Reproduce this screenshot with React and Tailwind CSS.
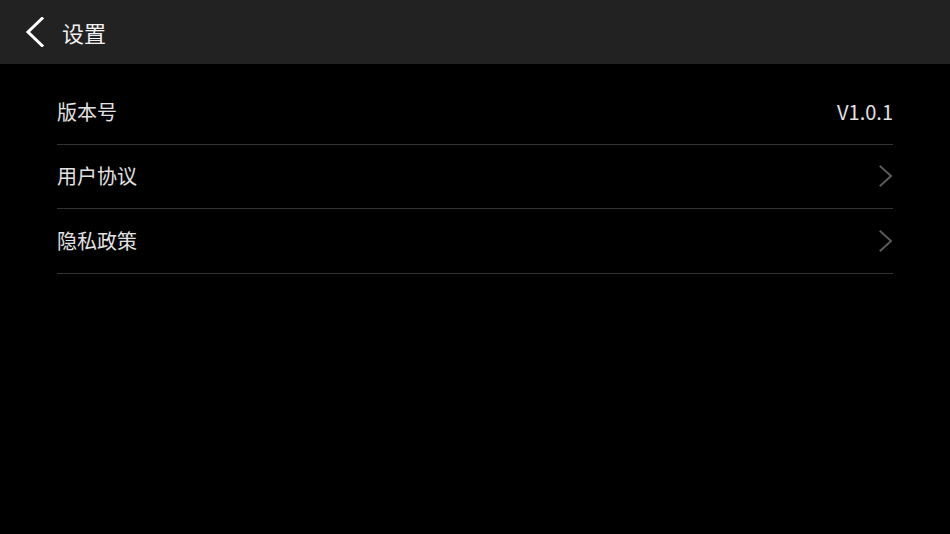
import React from 'react';

const rows = [
  { id: 'version', label: '版本号', value: 'V1.0.1' },
  { id: 'agreement', label: '用户协议', arrow: true },
  { id: 'privacy', label: '隐私政策', arrow: true },
];

const ChevronRight = () => (
  <svg width="14" height="22" viewBox="0 0 14 22" fill="none">
    <path d="M1.5 1.5 L12 11 L1.5 20.5" stroke="#5a5a5a" strokeWidth="2" strokeLinecap="square" />
  </svg>
);

export default function App() {
  return (
    <div
      className="w-[950px] h-[534px] bg-black flex flex-col overflow-hidden"
      style={{ fontFamily: '"Noto Sans CJK SC", "Noto Sans", sans-serif' }}
    >
      {/* Header */}
      <div className="h-16 bg-[#222222] flex items-center shrink-0">
        <button className="w-[62px] h-16 flex items-center pl-[25px]">
          <svg width="20" height="30" viewBox="0 0 20 30" fill="none">
            <path d="M17 1.5 L3 15 L17 28.5" stroke="#ffffff" strokeWidth="3" strokeLinecap="square" />
          </svg>
        </button>
        <h1 className="text-[22px] text-[#f0f0f0] leading-none">设置</h1>
      </div>

      {/* List */}
      <div className="pt-4 px-[57px]">
        {rows.map(row => (
          <div
            key={row.id}
            className="h-[64.5px] flex items-center justify-between border-b border-[#333333]"
          >
            <span className="text-[20px] text-[#e2e2e2] leading-none">{row.label}</span>
            {row.value && (
              <span className="text-[20px] text-[#e2e2e2] leading-none">{row.value}</span>
            )}
            {row.arrow && <ChevronRight />}
          </div>
        ))}
      </div>
    </div>
  );
}
